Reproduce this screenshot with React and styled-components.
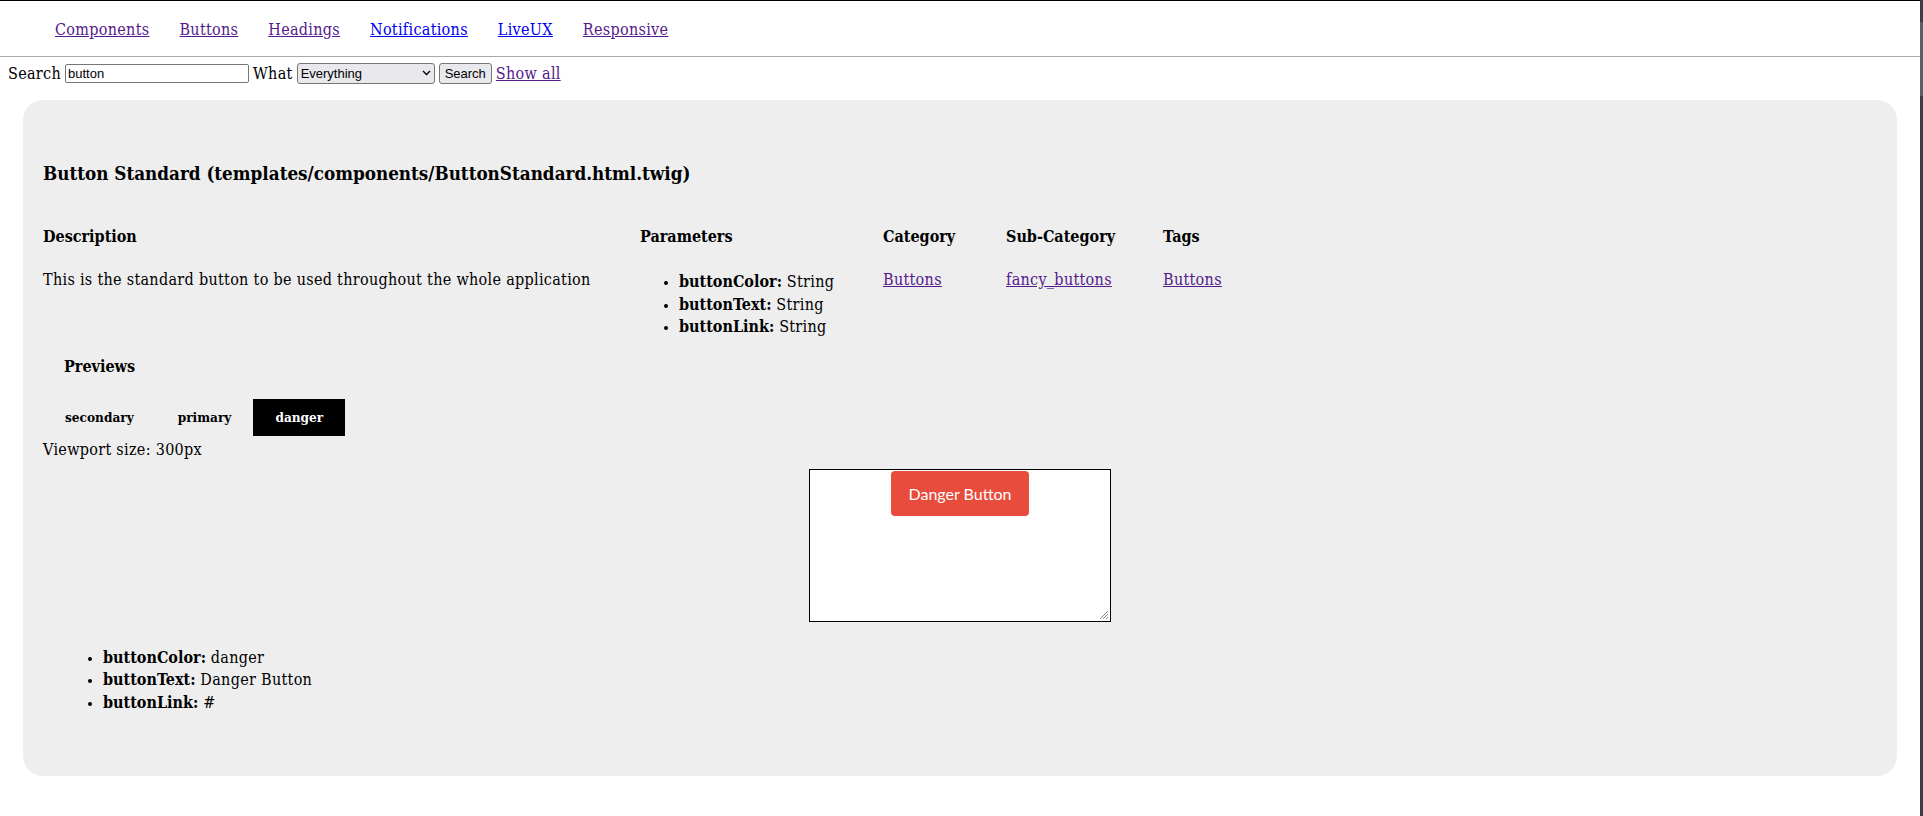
import styled, { createGlobalStyle } from 'styled-components';

const GlobalStyle = createGlobalStyle`
  html, body {
    margin: 0;
    background: #fff;
  }
  body {
    font-family: "DejaVu Serif Condensed", "DejaVu Serif", serif;
    font-stretch: condensed;
    font-size: 16px;
    letter-spacing: 0.3px;
    color: #000;
    border-top: 1px solid #000;
  }
  a {
    color: #551a8b;
  }
  b {
    letter-spacing: 0;
  }
`;

const WindowEdge = styled.div`
  position: fixed;
  top: 0;
  right: 0;
  bottom: 0;
  width: 3px;
  background: #3b3f43;
  &::after {
    content: '';
    position: absolute;
    top: 22px;
    left: 0;
    width: 3px;
    height: 74px;
    background: #5a5f64;
  }
`;

const Page = styled.div`
  width: 1920px;
`;

const Nav = styled.nav`
  height: 53px;
  padding-top: 2px;
  border-bottom: 1px solid #a9a9a9;
  display: flex;
  align-items: center;
  padding-left: 55px;
  gap: 30px;
`;

const NavLink = styled.a`
  color: ${(props) => (props.fresh ? '#0000ee' : '#551a8b')};
  line-height: 22px;
`;

const SearchBar = styled.form`
  display: flex;
  align-items: center;
  height: 30px;
  margin-top: 1px;
  padding: 0 8px;
  gap: 4px;
`;

const Field = styled.input`
  width: 178px;
  height: 15px;
  padding: 1px 2px;
  border: 1px solid #767676;
  border-radius: 2px;
  font: 13px "Liberation Sans", Arial, sans-serif;
`;

const Select = styled.div`
  width: 130px;
  height: 17px;
  padding: 1px 3px;
  border: 1px solid #767676;
  border-radius: 3px;
  background: #e9e9ed;
  font: 13px "Liberation Sans", Arial, sans-serif;
  letter-spacing: 0;
  display: flex;
  align-items: center;
  justify-content: space-between;
`;

const FormButton = styled.button`
  height: 21px;
  padding: 1px 5px;
  border: 1px solid #767676;
  border-radius: 3px;
  background: #e9e9ed;
  font: 13px "Liberation Sans", Arial, sans-serif;
  color: #000;
`;

const Panel = styled.section`
  margin: 12px 23px 0;
  padding: 60px 20px 62px;
  background: #eeeeee;
  border-radius: 20px;
`;

const Title = styled.h3`
  margin: 0 0 40px;
  font-size: 18.7px;
  line-height: 26px;
  font-weight: bold;
  letter-spacing: 0;
`;

const InfoGrid = styled.div`
  display: grid;
  grid-template-columns: 597px 243px 123px 157px 1fr;
  grid-template-rows: 22px auto;
  row-gap: 21px;
  line-height: 22px;
`;

const Head = styled.div`
  font-weight: bold;
  letter-spacing: 0;
`;

const ParamList = styled.ul`
  margin: 2px 0 0;
  padding-left: ${(props) => props.indent}px;
  line-height: ${(props) => props.lh}px;
  li::marker {
    font-size: 14px;
  }
`;

const PreviewTitle = styled.h4`
  margin: 17px 0 21px 21px;
  font-size: 16px;
  line-height: 22px;
  letter-spacing: 0;
`;

const Tabs = styled.div`
  display: flex;
`;

const Tab = styled.div`
  height: 37px;
  padding: 0 22px;
  display: flex;
  align-items: center;
  font-size: 13.5px;
  font-weight: bold;
  letter-spacing: 0;
  background: ${(props) => (props.active ? '#000' : 'transparent')};
  color: ${(props) => (props.active ? '#fff' : '#000')};
`;

const Viewport = styled.div`
  margin-top: 3px;
  line-height: 22px;
`;

const Frame = styled.div`
  position: relative;
  width: 300px;
  height: 151px;
  margin: 8px auto 0;
  border: 1px solid #000;
  background: #fff;
  display: flex;
  justify-content: center;
  align-items: flex-start;
`;

const DangerButton = styled.a`
  margin-top: 1px;
  padding: 12px 17px;
  background: #e74c3c;
  color: #fff;
  border-radius: 4px;
  font-family: Lato, "Liberation Sans", sans-serif;
  font-size: 16px;
  line-height: 21px;
  letter-spacing: 0;
  text-decoration: none;
`;

const Grip = styled.svg`
  position: absolute;
  right: 1px;
  bottom: 1px;
`;

const Usage = styled(ParamList)`
  margin: 25px 0 0 21px;
`;

const params = [
  ['buttonColor', 'String'],
  ['buttonText', 'String'],
  ['buttonLink', 'String'],
];

const usage = [
  ['buttonColor', 'danger'],
  ['buttonText', 'Danger Button'],
  ['buttonLink', '#'],
];

function App() {
  return (
    <Page>
      <GlobalStyle />
      <WindowEdge />
      <Nav>
        <NavLink href="#">Components</NavLink>
        <NavLink href="#">Buttons</NavLink>
        <NavLink href="#">Headings</NavLink>
        <NavLink href="#" fresh>Notifications</NavLink>
        <NavLink href="#" fresh>LiveUX</NavLink>
        <NavLink href="#">Responsive</NavLink>
      </Nav>
      <SearchBar>
        Search
        <Field defaultValue="button" />
        What
        <Select>
          Everything
          <svg width="9" height="6" viewBox="0 0 9 6">
            <path d="M1 1l3.5 3.5L8 1" fill="none" stroke="#000" strokeWidth="1.3" />
          </svg>
        </Select>
        <FormButton type="button">Search</FormButton>
        <a href="#">Show all</a>
      </SearchBar>
      <Panel>
        <Title>Button Standard (templates/components/ButtonStandard.html.twig)</Title>
        <InfoGrid>
          <Head>Description</Head>
          <Head>Parameters</Head>
          <Head>Category</Head>
          <Head>Sub-Category</Head>
          <Head>Tags</Head>
          <div>This is the standard button to be used throughout the whole application</div>
          <ParamList indent={39} lh={22.5}>
            {params.map(([name, type]) => (
              <li key={name}><b>{name}:</b> {type}</li>
            ))}
          </ParamList>
          <div><a href="#">Buttons</a></div>
          <div><a href="#">fancy_buttons</a></div>
          <div><a href="#">Buttons</a></div>
        </InfoGrid>
        <PreviewTitle>Previews</PreviewTitle>
        <Tabs>
          <Tab>secondary</Tab>
          <Tab>primary</Tab>
          <Tab active>danger</Tab>
        </Tabs>
        <Viewport>Viewport size: 300px</Viewport>
        <Frame>
          <DangerButton href="#">Danger Button</DangerButton>
          <Grip width="10" height="10" viewBox="0 0 10 10">
            <path d="M9 1L1 9M9 4L4 9M9 7L7 9" stroke="#8a8a8a" strokeWidth="1" />
          </Grip>
        </Frame>
        <Usage indent={39} lh={22.5}>
          {usage.map(([name, value]) => (
            <li key={name}><b>{name}:</b> {value}</li>
          ))}
        </Usage>
      </Panel>
    </Page>
  );
}

export default App;
